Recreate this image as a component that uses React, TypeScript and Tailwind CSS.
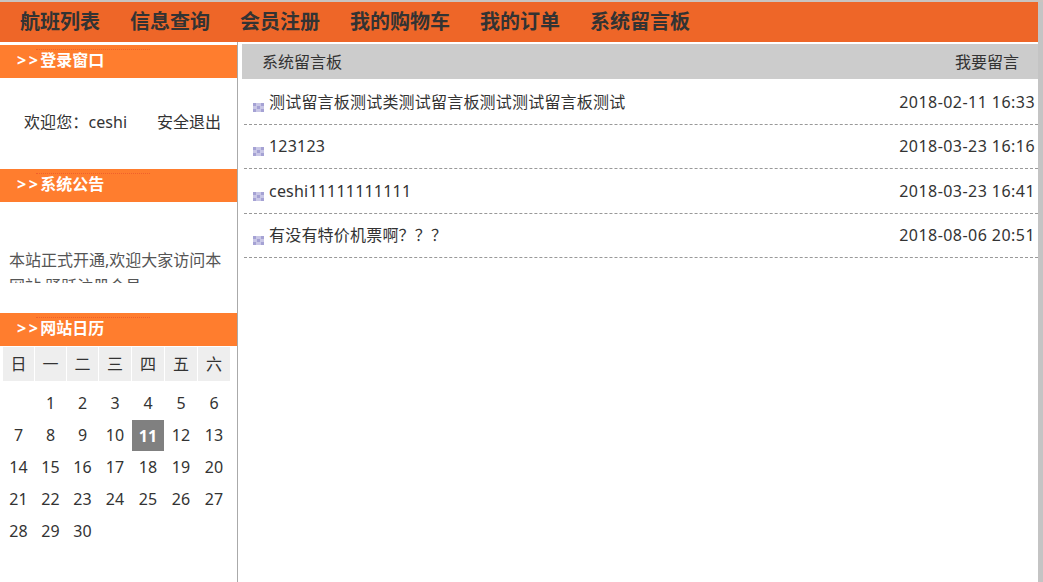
const font = { fontFamily: '"Noto Sans", "Noto Sans CJK SC", sans-serif' };

const navItems = ["航班列表", "信息查询", "会员注册", "我的购物车", "我的订单", "系统留言板"];
const messages = [
  ["测试留言板测试类测试留言板测试测试留言板测试", "2018-02-11 16:33"],
  ["123123", "2018-03-23 16:16"],
  ["ceshi11111111111", "2018-03-23 16:41"],
  ["有没有特价机票啊？？？", "2018-08-06 20:51"],
];
const week = ["日", "一", "二", "三", "四", "五", "六"];
const days: (number | null)[] = [null, ...Array.from({ length: 30 }, (_, i) => i + 1)];

function SideHead({ title }: { title: string }) {
  return (
    <div className="relative flex h-[33px] items-center bg-[#ff7d2e] pb-[3px] pl-[17px] text-[16px] leading-[26px] font-bold text-white">
      <div className="absolute top-[4px] left-[36px] w-[114px] border-t border-dotted border-[#f0602a]" />
      <span className="tracking-[2.5px]">&gt;&gt;</span>
      <span>{title}</span>
    </div>
  );
}

function Bullet() {
  return (
    <svg width="11" height="9" viewBox="0 0 11 9" className="mt-[11px] mr-[5px] shrink-0">
      <rect x="0" y="0" width="11" height="9" fill="#c9c7e6" />
      <g fill="#a5a2d4">
        <rect x="0" y="0" width="3" height="3" />
        <rect x="8" y="0" width="3" height="3" />
        <rect x="4" y="3" width="3" height="3" />
        <rect x="0" y="6" width="3" height="3" />
        <rect x="8" y="6" width="3" height="3" />
      </g>
    </svg>
  );
}

export default function App() {
  return (
    <div style={font} className="flex h-[582px] w-[1043px] flex-col overflow-hidden bg-white text-[16px] text-[#333]">
      <div className="h-[2px] bg-[#c9c4c0]" />
      <div className="flex min-h-0 flex-1">
        <div className="flex min-w-0 flex-1 flex-col">
          <div className="flex h-[40px] shrink-0 items-center bg-[#ee6628] pl-[20px] text-[20px] font-bold text-[#333]">
            {navItems.map((n) => (
              <span key={n} className="mr-[30px] leading-[40px]">{n}</span>
            ))}
          </div>
          <div className="flex min-h-0 flex-1">
            <div className="flex w-[238px] shrink-0 flex-col border-r border-[#aaa] pt-[3px]">
              <SideHead title="登录窗口" />
              <div className="flex h-[91px] items-center justify-between pr-[16px] pb-[4px] pl-[24px] text-[#333]">
                <span className="tracking-[0.1px]">欢迎您：ceshi</span>
                <span>安全退出</span>
              </div>
              <SideHead title="系统公告" />
              <div className="h-[111px] pt-[45px] pl-[9px]">
                <div className="h-[36px] overflow-hidden pr-[10px] text-[16px] leading-[26px] text-[#555]">
                  本站正式开通,欢迎大家访问本网站,踊跃注册会员
                </div>
              </div>
              <SideHead title="网站日历" />
              <div className="grid grid-cols-[32px_32px_32px_33px_33px_33px_33px] pt-[1px] pl-[3px] text-center">
                {week.map((w) => (
                  <div key={w} className="mr-[1px] flex h-[34px] items-center justify-center bg-[#eee] text-[#333]">{w}</div>
                ))}
                <div className="col-span-7 h-[6px]" />
                {days.map((d, i) => (
                  <div
                    key={i}
                    className={d === 11
                      ? "mr-[1px] flex h-[31px] items-center justify-center self-end bg-[#808080] font-bold text-white"
                      : "mr-[1px] flex h-[32px] items-center justify-center text-[#333]"}
                  >
                    {d}
                  </div>
                ))}
              </div>
            </div>
            <div className="flex min-w-0 flex-1 flex-col pt-[2px] pl-[4px]">
              <div className="flex h-[35px] shrink-0 items-center justify-between bg-[#ccc] pr-[19px] pl-[20px] text-[16px] text-[#333]">
                <span>系统留言板</span>
                <span>我要留言</span>
              </div>
              <div className="pt-[1px] pl-[2px]">
                {messages.map(([t, d]) => (
                  <div key={d} className="flex h-[44.5px] items-center justify-between border-b border-dashed border-[#999] pr-[3px] pl-[9px] text-[16px]">
                    <span className="flex items-center"><Bullet /><span className="tracking-[0.2px]">{t}</span></span>
                    <span className="tracking-[0.45px]">{d}</span>
                  </div>
                ))}
              </div>
            </div>
          </div>
        </div>
        <div className="w-[5px] shrink-0 bg-[#c4c4c4]" />
      </div>
    </div>
  );
}
